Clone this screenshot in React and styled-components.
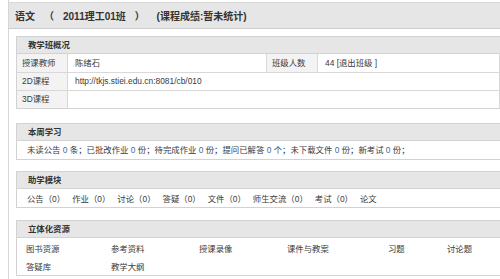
import { styled, createGlobalStyle } from "styled-components";

const GlobalStyle = createGlobalStyle`
  html, body {
    margin: 0;
    height: 279px;
    background: #fff;
    overflow: hidden;
  }
  body {
    font-family: "Liberation Sans", "Noto Sans CJK SC", sans-serif;
    font-size: 8.4px;
    color: #3a3a3a;
  }
`;

const Page = styled.div`
  margin-left: 8px;
  padding-top: 2px;
  width: 491px;
  height: 277px;
  overflow: hidden;
  border-left: 1px solid #d6d6d6;
`;

const TitleBar = styled.div`
  height: 25px;
  display: flex;
  align-items: center;
  gap: 9px;
  padding-left: 6px;
  background: #e6e6e6;
  border-top: 1px solid #d9d9d9;
  border-bottom: 1px solid #cdcdcd;
  font-size: 10px;
  font-weight: bold;
  color: #333;
  white-space: nowrap;
`;

const Content = styled.div`
  padding: 7px 0 0 7px;
`;

const Section = styled.div`
  border: 1px solid #d2d2d2;
  border-right: none;
  margin-bottom: ${(p) => p.$gap || 13}px;
`;

const SectionHeader = styled.div`
  height: 16px;
  line-height: 16px;
  padding-left: 11px;
  background: #e6e6e6;
  border-bottom: 1px solid #d2d2d2;
  font-weight: bold;
  color: #333;
`;

const Table = styled.table`
  border-collapse: collapse;
  width: 100%;

  tr {
    height: 18px;
  }
  td {
    padding: 0 0 0 7px;
    line-height: 12px;
    border-bottom: 1px solid #d8d8d8;
    border-right: 1px solid #d8d8d8;
    white-space: nowrap;
  }
  tr:last-child td {
    border-bottom: none;
  }
`;

const Label = styled.td`
  width: 45px;
  background: #f3f3f3;
  && {
    padding-left: 5px;
  }
`;

const Value = styled.td`
  width: ${(p) => (p.$w ? `${p.$w}px` : "auto")};
`;

const Line = styled.div`
  height: 18px;
  line-height: 18px;
  padding-left: 10px;
  white-space: nowrap;
`;

const Num = styled.span`
  color: #3d6b9e;
`;

const Modules = styled.div`
  height: 18px;
  display: flex;
  align-items: center;
  gap: 7px;
  padding-left: 10px;
  white-space: nowrap;
`;

const Resources = styled.div`
  display: grid;
  grid-template-columns: 85px 88px 88px 101px 59px 60px;
  grid-auto-rows: 18px;
  align-items: center;
  padding: 1px 0 0 9px;
`;

const weekly = [
  ["未读公告", "条"],
  ["已批改作业", "份"],
  ["待完成作业", "份"],
  ["提问已解答", "个"],
  ["未下载文件", "份"],
  ["新考试", "份"],
];

const modules = ["公告（0）", "作业（0）", "讨论（0）", "答疑（0）", "文件（0）", "师生交流（0）", "考试（0）", "论文"];

const resources = ["图书资源", "参考资料", "授课录像", "课件与教案", "习题", "讨论题", "答疑库", "教学大纲"];

const App = () => {
  return (
    <Page>
      <GlobalStyle />
      <TitleBar>
        <span>语文</span>
        <span>（</span>
        <span>2011理工01班</span>
        <span>）</span>
        <span>&nbsp;(课程成绩:暂未统计)</span>
      </TitleBar>
      <Content>
        <Section $gap={14}>
          <SectionHeader>教学班概况</SectionHeader>
          <Table>
            <tbody>
              <tr>
                <Label>授课教师</Label>
                <Value $w={191}>陈绪石</Value>
                <Label>班级人数</Label>
                <Value>44 [退出班级 ]</Value>
              </tr>
              <tr>
                <Label>2D课程</Label>
                <Value colSpan={3}>http://tkjs.stiei.edu.cn:8081/cb/010</Value>
              </tr>
              <tr>
                <Label>3D课程</Label>
                <Value colSpan={3}></Value>
              </tr>
            </tbody>
          </Table>
        </Section>
        <Section $gap={11}>
          <SectionHeader>本周学习</SectionHeader>
          <Line>
            {weekly.map(([name, unit]) => (
              <span key={name}>
                {name} <Num>0</Num> {unit}；
              </span>
            ))}
          </Line>
        </Section>
        <Section $gap={12}>
          <SectionHeader>助学模块</SectionHeader>
          <Modules>
            {modules.map((m) => (
              <span key={m}>{m}</span>
            ))}
          </Modules>
        </Section>
        <Section>
          <SectionHeader>立体化资源</SectionHeader>
          <Resources>
            {resources.map((r) => (
              <span key={r}>{r}</span>
            ))}
          </Resources>
        </Section>
      </Content>
    </Page>
  );
};

export default App;
